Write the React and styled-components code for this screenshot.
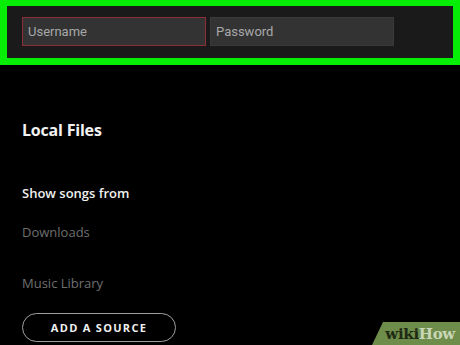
import styled, { createGlobalStyle } from "styled-components";

const Global = createGlobalStyle`
  html, body {
    margin: 0;
    padding: 0;
    background: #000;
  }
  body {
    font-family: "Open Sans", Roboto, sans-serif;
  }
`;

const Page = styled.div`
  position: relative;
  width: 460px;
  height: 345px;
  overflow: hidden;
  background: #000;
`;

const LoginBar = styled.div`
  box-sizing: border-box;
  height: 65px;
  border: 7px solid #06ee06;
  border-top-width: 6px;
  background: #1b1a1b;
  display: flex;
  gap: 4px;
  padding: 11px 0 0 15px;
`;

const Field = styled.div`
  box-sizing: border-box;
  width: 184px;
  height: 29px;
  background: #333334;
  border: 1px solid ${(p) => (p.$active ? "#8c2e3a" : "#3a3a3a")};
  color: #a8a8a8;
  font-family: Roboto, "Open Sans", sans-serif;
  font-size: 13px;
  line-height: 27px;
  padding-left: 5px;
`;

const Content = styled.div`
  display: flex;
  flex-direction: column;
  align-items: flex-start;
  padding-left: 22px;
`;

const Title = styled.div`
  margin-top: 55px;
  color: #f2f2f2;
  font-size: 16px;
  font-weight: 700;
  line-height: 20px;
  letter-spacing: -0.2px;
`;

const Label = styled.div`
  margin-top: ${(p) => p.$top}px;
  color: ${(p) => (p.$muted ? "#6f6f6f" : "#f0f0f0")};
  font-size: 13px;
  font-weight: ${(p) => (p.$muted ? 400 : 600)};
  line-height: 18px;
`;

const SourceButton = styled.div`
  box-sizing: border-box;
  margin-top: 21px;
  width: 154px;
  height: 29px;
  border: 1px solid #a0a0a0;
  border-radius: 15px;
  color: #f0f0f0;
  font-size: 11px;
  font-weight: 700;
  letter-spacing: 1.3px;
  display: flex;
  align-items: center;
  justify-content: center;
`;

const Watermark = styled.div`
  position: absolute;
  right: 0;
  bottom: 0;
  width: 88px;
  height: 23px;
  background: #6e8c4a;
  clip-path: polygon(11px 0, 100% 0, 100% 100%, 0 100%);
  display: flex;
  align-items: center;
  justify-content: flex-end;
  padding-right: 5px;
  box-sizing: border-box;
  font-family: "DejaVu Serif", "Liberation Serif", serif;
  font-weight: 700;
  font-size: 15px;
  letter-spacing: -0.3px;
`;

const Wiki = styled.span`
  color: #1e2a14;
`;

const How = styled.span`
  color: #c9d6b8;
`;

export default function App() {
  return (
    <Page>
      <Global />
      <LoginBar>
        <Field $active>Username</Field>
        <Field>Password</Field>
      </LoginBar>
      <Content>
        <Title>Local Files</Title>
        <Label $top={44}>Show songs from</Label>
        <Label $top={21} $muted>Downloads</Label>
        <Label $top={33} $muted>Music Library</Label>
        <SourceButton>ADD A SOURCE</SourceButton>
      </Content>
      <Watermark>
        <Wiki>wiki</Wiki>
        <How>How</How>
      </Watermark>
    </Page>
  );
}
